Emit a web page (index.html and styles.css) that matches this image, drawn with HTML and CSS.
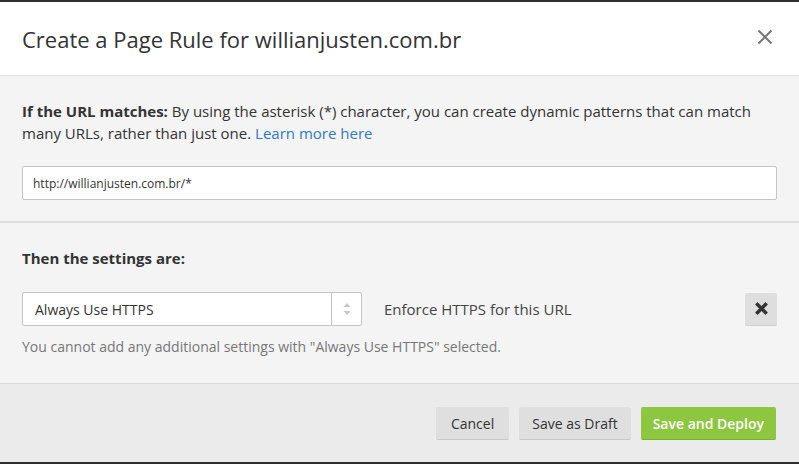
FILE: index.html
```html
<!DOCTYPE html>
<html>
<head>
<meta charset="utf-8">
<link rel="stylesheet" href="styles.css">
</head>
<body>
<div class="modal">
  <div class="modal-header">
    <h1 class="modal-title">Create a Page Rule for willianjusten.com.br</h1>
    <button class="close" aria-label="Close">
      <svg width="16" height="16" viewBox="0 0 16 16"><path d="M1.5 1.5 L14.5 14.5 M14.5 1.5 L1.5 14.5" stroke="#777" stroke-width="2" fill="none"/></svg>
    </button>
  </div>
  <div class="section section-url">
    <p class="intro"><strong>If the URL matches:</strong> By using the asterisk (*) character, you can create dynamic patterns that can match many URLs, rather than just one. <a href="#" class="link">Learn more here</a></p>
    <input class="text-input" type="text" value="http://willianjusten.com.br/*">
  </div>
  <div class="section section-settings">
    <h2 class="settings-title">Then the settings are:</h2>
    <div class="setting-row">
      <div class="select">
        <span class="select-value">Always Use HTTPS</span>
        <span class="select-arrows">
          <svg width="8" height="14" viewBox="0 0 8 14"><path d="M4 1 L7.5 5 H0.5 Z" fill="#c8c8c8"/><path d="M4 13 L7.5 9 H0.5 Z" fill="#c8c8c8"/></svg>
        </span>
      </div>
      <span class="setting-desc">Enforce HTTPS for this URL</span>
      <button class="remove" aria-label="Remove">
        <svg width="13" height="13" viewBox="0 0 13 13"><path d="M2.5 2.5 L10.5 10.5 M10.5 2.5 L2.5 10.5" stroke="#333" stroke-width="3.4" stroke-linecap="square" fill="none"/></svg>
      </button>
    </div>
    <p class="help">You cannot add any additional settings with "Always Use HTTPS" selected.</p>
  </div>
  <div class="modal-footer">
    <button class="btn">Cancel</button>
    <button class="btn btn-draft">Save as Draft</button>
    <button class="btn btn-primary">Save and Deploy</button>
  </div>
</div>
</body>
</html>
```
FILE: styles.css
```css
* { box-sizing: border-box; }
html, body {
  margin: 0;
  padding: 0;
  background: #2e2e2e;
  height: 464px;
  overflow: hidden;
}
body {
  padding-top: 2px;
  font-family: "Open Sans", "Liberation Sans", sans-serif;
  color: #333;
}
.modal {
  width: 799px;
  height: 460px;
  background: #f4f4f4;
  display: flex;
  flex-direction: column;
}
.modal-header {
  height: 74px;
  background: #fff;
  border-bottom: 1px solid #e0e0e0;
  display: flex;
  align-items: center;
  justify-content: space-between;
  padding: 0 26px 0 22px;
}
.modal-title {
  margin: 0;
  font-size: 22px;
  font-weight: 400;
  color: #333;
}
.close {
  border: 0;
  background: none;
  padding: 0;
  width: 16px;
  height: 16px;
  display: flex;
  margin-top: -3px;
}
.section {
  padding: 0 22px;
}
.section-url {
  padding-top: 24px;
  padding-bottom: 21px;
  border-bottom: 2px solid #dedede;
}
.intro {
  margin: 0;
  font-size: 15px;
  line-height: 22px;
  color: #333;
}
.intro strong { font-weight: 700; }
.link { color: #2f7bbf; text-decoration: none; }
.text-input {
  display: block;
  width: 100%;
  height: 34px;
  margin-top: 22px;
  border: 1px solid #c4c4c4;
  border-radius: 2px;
  background: #fff;
  padding: 0 10px;
  font-family: "Open Sans", "Liberation Sans", sans-serif;
  font-size: 12px;
  color: #333;
  outline: none;
}
.section-settings {
  padding-top: 24px;
  padding-bottom: 25px;
  border-bottom: 1px solid #dadada;
}
.settings-title {
  margin: 0;
  font-size: 15px;
  line-height: 22px;
  font-weight: 700;
  color: #333;
}
.setting-row {
  margin-top: 23px;
  display: flex;
  align-items: center;
}
.select {
  width: 340px;
  height: 34px;
  background: #fff;
  border: 1px solid #c4c4c4;
  border-radius: 2px;
  display: flex;
  align-items: center;
}
.select-value {
  flex: 1;
  padding-left: 12px;
  font-size: 14px;
  color: #333;
}
.select-arrows {
  width: 30px;
  height: 100%;
  border-left: 1px solid #c4c4c4;
  display: flex;
  align-items: center;
  justify-content: center;
}
.setting-desc {
  flex: 1;
  margin-left: 22px;
  font-size: 15px;
  color: #444;
}
.remove {
  width: 32px;
  height: 33px;
  border: 0;
  border-bottom: 1px solid #d0d0d0;
  border-radius: 2px;
  background: #dedede;
  padding: 0;
  display: flex;
  align-items: center;
  justify-content: center;
}
.help {
  margin: 10px 0 0;
  font-size: 14px;
  line-height: 22px;
  color: #777;
}
.modal-footer {
  flex: 1;
  background: #ebebeb;
  display: flex;
  justify-content: flex-end;
  align-items: flex-start;
  gap: 10px;
  padding: 23px 23px 0 0;
}
.btn {
  height: 33px;
  padding: 0 15px;
  border: 0;
  border-bottom: 1px solid #c8c8c8;
  border-radius: 2px;
  background: #dfdfdf;
  font-family: "Open Sans", "Liberation Sans", sans-serif;
  font-size: 14px;
  color: #333;
}
.btn-draft {
  padding: 0 13px;
}
.btn-primary {
  background: #8dc63f;
  border-bottom-color: #7bb02f;
  color: #fff;
  font-weight: 600;
  padding: 0 12px;
}
```
